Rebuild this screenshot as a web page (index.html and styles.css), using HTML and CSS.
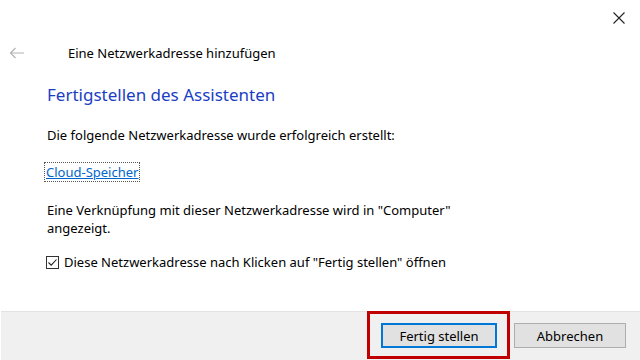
FILE: index.html
```html
<!DOCTYPE html>
<html lang="de">
<head>
<meta charset="utf-8">
<title>Eine Netzwerkadresse hinzufügen</title>
<link rel="stylesheet" href="styles.css">
</head>
<body>
<div class="window">
  <div class="titlebar">
    <span class="close" aria-label="Schließen">
      <svg width="12" height="12" viewBox="0 0 12 12"><path d="M0.5 0.5L11.5 11.5M11.5 0.5L0.5 11.5" stroke="#222" stroke-width="1.1" fill="none"/></svg>
    </span>
  </div>
  <div class="header">
    <span class="back">
      <svg width="16" height="12" viewBox="0 0 16 12"><path d="M15 6H1.5M6.5 1L1.5 6L6.5 11" stroke="#b4b4b4" stroke-width="1.2" fill="none"/></svg>
    </span>
    <span class="header-title">Eine Netzwerkadresse hinzufügen</span>
  </div>
  <main class="content">
    <h1 class="heading">Fertigstellen des Assistenten</h1>
    <p class="text">Die folgende Netzwerkadresse wurde erfolgreich erstellt:</p>
    <p class="link-row"><a class="link" href="#">Cloud-Speicher</a></p>
    <p class="text text-note">Eine Verknüpfung mit dieser Netzwerkadresse wird in "Computer"<br>angezeigt.</p>
    <label class="check">
      <span class="box"><svg width="11" height="11" viewBox="0 0 11 11"><path d="M1.5 5.5L4.2 8.2L9.5 2.5" stroke="#222" stroke-width="1.1" fill="none"/></svg></span>
      <span>Diese Netzwerkadresse nach Klicken auf "Fertig stellen" öffnen</span>
    </label>
  </main>
  <footer class="footer">
    <span class="highlight"><button class="btn btn-default">Fertig stellen</button></span>
    <button class="btn">Abbrechen</button>
  </footer>
</div>
</body>
</html>
```
FILE: styles.css
```css
* { box-sizing: border-box; }
html, body { margin: 0; padding: 0; }
body {
  width: 640px;
  height: 360px;
  overflow: hidden;
  background: #fff;
  font-family: "Segoe UI", "Noto Sans", "Open Sans", sans-serif;
  font-size: 13px;
  color: #000;
}
.window {
  display: flex;
  flex-direction: column;
  height: 360px;
}
.titlebar {
  height: 36px;
  display: flex;
  justify-content: flex-end;
  align-items: center;
  padding-right: 15px;
}
.close { display: flex; }
.header {
  display: flex;
  align-items: center;
  height: 34px;
}
.back {
  display: flex;
  width: 68px;
  padding-left: 9px;
}
.header-title {
  font-size: 13px;
  color: #000;
}
.content {
  flex: 1;
  padding-left: 47px;
}
.heading {
  margin: 13px 0 0;
  font-weight: normal;
  font-size: 17px;
  color: #1a3ec3;
  line-height: 24px;
}
.text {
  margin: 19px 0 0;
  line-height: 18px;
}
.text-note { margin-top: 20px; }
.link-row { margin: 19px 0 0; line-height: 18px; }
.link {
  color: #0066cc;
  text-decoration: underline;
  outline: 1px dotted #555;
  outline-offset: 0;
  padding: 0 1px;
  margin-left: -2px;
}
.check {
  display: flex;
  align-items: center;
  gap: 5px;
  margin-top: 16px;
  margin-left: -1px;
  line-height: 18px;
}
.box {
  width: 13px;
  height: 13px;
  border: 1px solid #333;
  display: flex;
  align-items: center;
  justify-content: center;
  background: #fff;
}
.footer {
  height: 49px;
  background: #f0f0f0;
  border-top: 1px solid #e3e3e3;
  margin-left: 1px;
  display: flex;
  justify-content: flex-end;
  align-items: flex-start;
  padding-right: 14px;
}
.highlight {
  border: 3px solid #c00000;
  padding: 9px 10px 8px 11px;
  margin-top: -1px;
  margin-right: 4px;
  display: flex;
}
.btn {
  font-family: inherit;
  font-size: 13px;
  color: #000;
  background: #e1e1e1;
  border: 1px solid #adadad;
  width: 112px;
  height: 25px;
  padding: 0;
}
.btn-default {
  border: 2px solid #0078d7;
  width: 116px;
}
.footer > .btn { margin-top: 11px; }
```
